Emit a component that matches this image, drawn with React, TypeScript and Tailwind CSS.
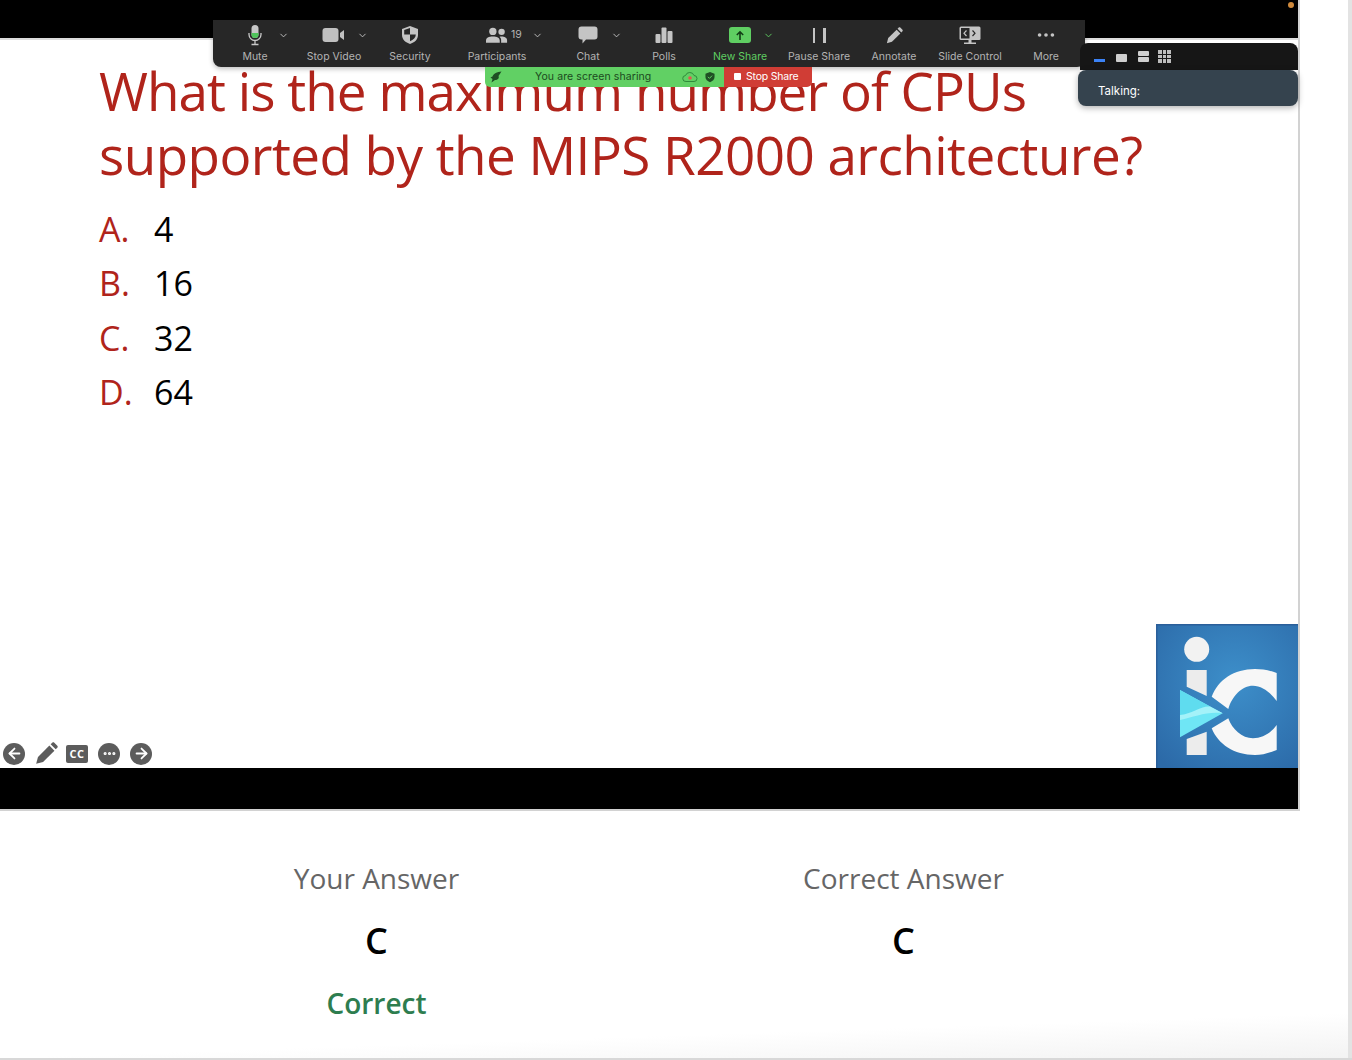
import { ArrowLeft, ArrowRight, ChevronDown, Ellipsis } from "lucide-react";

type ToolProps = {
  label: string;
  width: string;
  icon: React.ReactNode;
  caretLeft?: string;
  green?: boolean;
  children?: React.ReactNode;
};

function PencilIcon({ size, color, className }: { size: number; color: string; className?: string }) {
  return (
    <svg className={className} width={size} height={size} viewBox="0 0 20 20">
      <path d="M1 19L2.600 13L12.500 3.100L16.900 7.500L7 17.400Z" fill={color} />
      <path d="M13.600 2L15 0.600C15.500 0.100 16.300 0.100 16.800 0.600L19.400 3.200C19.900 3.700 19.900 4.500 19.400 5L18 6.400Z" fill={color} />
    </svg>
  );
}

function Tool({ label, width, icon, caretLeft, green, children }: ToolProps) {
  return (
    <div className={`relative flex h-full shrink-0 flex-col items-center pt-[4px] ${width}`}>
      <div className="flex h-[22px] items-center justify-center">{icon}</div>
      <span className={`mt-[4px] whitespace-nowrap text-[10.500px] leading-[14px] ${green ? "text-[#5fce62]" : "text-[#b4b4b4]"}`}>
        {label}
      </span>
      {caretLeft && (
        <ChevronDown
          size={11}
          strokeWidth={2}
          className={`absolute top-[10px] ${caretLeft} ${green ? "text-[#5fce62]" : "text-[#c4c4c4]"}`}
        />
      )}
      {children}
    </div>
  );
}

function ZoomToolbar() {
  return (
    <div className="absolute top-[20px] left-[213px] w-[872px] font-['Inter',sans-serif]">
      <div className="flex h-[47px] items-start rounded-b-[8px] bg-[#272727] shadow-[0_2px_5px_rgba(0,0,0,0.25)]">
        <Tool
          label="Mute"
          width="w-[84px]"
          caretLeft="left-[65px]"
          icon={
            <svg width="18" height="22" viewBox="0 0 18 22">
              <rect x="5.500" y="1" width="7" height="13" rx="3.500" fill="#c8c8c8" />
              <path d="M5.500 9h7v1.500a3.500 3.500 0 0 1-7 0z" fill="#4fc45a" />
              <path d="M3 9v1.500a6 6 0 0 0 12 0V9M9 16.500V20M5.500 20.500h7" fill="none" stroke="#c8c8c8" strokeWidth="1.300" />
            </svg>
          }
        />
        <Tool
          label="Stop Video"
          width="w-[74px]"
          caretLeft="left-[60px]"
          icon={
            <svg width="24" height="16" viewBox="0 0 24 16">
              <rect x="0.500" y="1" width="16" height="14" rx="3" fill="#c0c0c0" />
              <path d="M18 6l4-3v10l-4-3z" fill="#c0c0c0" />
            </svg>
          }
        />
        <Tool
          label="Security"
          width="w-[78px]"
          icon={
            <svg width="18" height="20" viewBox="0 0 18 20">
              <path d="M9 1l8 3v6c0 4.500-3.500 7.500-8 9-4.500-1.500-8-4.500-8-9V4z" fill="#c4c4c4" />
              <path d="M9 3v6.500H3.200V5zM9 9.500h5.800c0 3-2.400 5.400-5.800 6.800z" fill="#272727" />
            </svg>
          }
        />
        <Tool
          label="Participants"
          width="w-[96px]"
          caretLeft="left-[83px]"
          icon={
            <svg width="22" height="17" viewBox="0 0 24 18">
              <circle cx="7.500" cy="4.500" r="4" fill="#c4c4c4" />
              <circle cx="17" cy="5" r="3.500" fill="#c4c4c4" />
              <path d="M0 17v-2.500C0 11.500 3 10 7.500 10s7.500 1.500 7.500 4.500V17zM16.500 17v-3c0-1.500-.6-2.700-1.700-3.600 4-.7 8.200.6 8.200 3.800V17z" fill="#c4c4c4" />
            </svg>
          }
        >
          <span className="absolute top-[8px] left-[62px] text-[10.500px] leading-[14px] text-[#b4b4b4]">19</span>
        </Tool>
        <Tool
          label="Chat"
          width="w-[86px]"
          caretLeft="left-[66px]"
          icon={
            <svg width="20" height="18" viewBox="0 0 20 18">
              <path d="M3.500 0.500h13a3 3 0 0 1 3 3v7a3 3 0 0 1-3 3H8l-3.500 4v-4h-1a3 3 0 0 1-3-3v-7a3 3 0 0 1 3-3z" fill="#c4c4c4" />
            </svg>
          }
        />
        <Tool
          label="Polls"
          width="w-[66px]"
          icon={
            <svg width="18" height="17" viewBox="0 0 18 17">
              <rect x="0.500" y="7" width="5" height="9" rx="1" fill="#c4c4c4" />
              <rect x="6.500" y="0.500" width="5" height="15.500" rx="1" fill="#c4c4c4" />
              <rect x="12.500" y="4" width="5" height="12" rx="1" fill="#c4c4c4" />
            </svg>
          }
        />
        <Tool
          label="New Share"
          width="w-[86px]"
          caretLeft="left-[66px]"
          green
          icon={
            <div className="flex h-[16px] w-[22px] items-center justify-center rounded-[3px] bg-[#5fce62]">
              <svg width="10" height="11" viewBox="0 0 10 11">
                <path d="M5 10V2M1.800 5L5 1.800 8.200 5" fill="none" stroke="#123d16" strokeWidth="1.600" />
              </svg>
            </div>
          }
        />
        <Tool
          label="Pause Share"
          width="w-[72px]"
          icon={
            <div className="flex h-[15px] gap-[8px]">
              <div className="w-[2.500px] bg-[#c4c4c4]" />
              <div className="w-[2.500px] bg-[#c4c4c4]" />
            </div>
          }
        />
        <Tool label="Annotate" width="w-[78px]" icon={<PencilIcon size={17} color="#c4c4c4" />} />
        <Tool
          label="Slide Control"
          width="w-[74px]"
          icon={
            <svg width="22" height="19" viewBox="0 0 22 19">
              <rect x="0.500" y="0.500" width="21" height="13.500" rx="1.500" fill="#c4c4c4" />
              <rect x="2" y="2" width="8.500" height="10.500" fill="#272727" />
              <path d="M7.500 4.500L5 7.200l2.500 2.800" fill="none" stroke="#c4c4c4" strokeWidth="1.200" />
              <path d="M13.500 4.500L16 7.200l-2.500 2.800" fill="none" stroke="#272727" strokeWidth="1.200" />
              <path d="M9.500 14h3v2.500h-3zM5 16.500h12V18H5z" fill="#c4c4c4" />
            </svg>
          }
        />
        <Tool label="More" width="w-[78px]" icon={<Ellipsis size={22} strokeWidth={2} className="text-[#c4c4c4]" />} />
      </div>
      <div className="ml-[272px] flex h-[20px] w-[327px] overflow-hidden rounded-b-[5px]">
        <div className="relative flex w-[239px] items-center bg-[#61d064] text-[#1c4a20]">
          <svg className="ml-[5px]" width="12" height="12" viewBox="0 0 12 12">
            <path d="M11.500 0.500C7 1 3.500 2.500 2.500 5.500L0.500 6.500 2.500 8 1.500 11.500 5 9c3 0 4.500-2 3.500-4z" fill="#1f4f24" />
          </svg>
          <span className="ml-[33px] w-[116px] text-[10.500px] leading-[14px] tracking-[0.1px] whitespace-nowrap">You are screen sharing</span>
          <svg className="ml-[31px]" width="16" height="12" viewBox="0 0 16 12">
            <path d="M4 10.500a3 3 0 0 1-.5-6A4.500 4.500 0 0 1 12 4.500a3 3 0 0 1 0 6z" fill="none" stroke="#2f8a3a" strokeWidth="1" />
            <circle cx="8" cy="7" r="1.800" fill="#e2564f" />
          </svg>
          <svg className="ml-[7px]" width="10" height="12" viewBox="0 0 11 12">
            <path d="M5.500 0.500l5 1.800v3.700c0 2.800-2.200 4.700-5 5.700-2.800-1-5-2.900-5-5.700V2.300z" fill="#1f4f24" />
            <path d="M3.200 5.800l1.700 1.700 2.900-3" fill="none" stroke="#61d064" strokeWidth="1.100" />
          </svg>
        </div>
        <div className="flex flex-1 items-center bg-[#d03d35] pb-[1px] pl-[10px] text-white">
          <div className="h-[7px] w-[7px] rounded-[1px] bg-white" />
          <span className="ml-[5px] text-[10.500px] leading-[14px] tracking-[-0.2px] whitespace-nowrap">Stop Share</span>
        </div>
      </div>
    </div>
  );
}

function ThumbnailPanel() {
  return (
    <div className="absolute top-[43px] left-[1078px] h-[63px] w-[220px] font-['Inter',sans-serif]">
      <div className="ml-[2px] flex h-[27px] items-center rounded-t-[8px] bg-[#161616] pl-[14px]">
        <div className="mt-[8px] h-[3px] w-[11px] bg-[#3b82f6]" />
        <div className="ml-[11px] mt-[3px] h-[8px] w-[11px] rounded-[1px] bg-[#cfcfcf]" />
        <div className="ml-[11px] flex flex-col gap-[1px]">
          <div className="h-[5px] w-[11px] rounded-[1px] bg-[#cfcfcf]" />
          <div className="h-[5px] w-[11px] rounded-[1px] bg-[#cfcfcf]" />
        </div>
        <div className="ml-[9px] grid grid-cols-3 gap-[1px]">
          {Array.from({ length: 9 }).map((_, i) => (
            <div key={i} className="h-[3.500px] w-[3.500px] bg-[#bdbdbd]" />
          ))}
        </div>
      </div>
      <div className="flex h-[36px] items-center rounded-[8px] bg-[#35434e] pt-[7px] pl-[20px] shadow-[0_2px_6px_rgba(0,0,0,0.3)]">
        <span className="text-[11.500px] text-white">Talking:</span>
      </div>
    </div>
  );
}

function Logo() {
  return (
    <svg className="absolute right-0 bottom-0" width="142" height="144" viewBox="0 0 142 144">
      <defs>
        <radialGradient id="bg" cx="0.550" cy="0.400" r="0.750">
          <stop offset="0" stopColor="#3d8fca" />
          <stop offset="1" stopColor="#2c6aa8" />
        </radialGradient>
      </defs>
      <rect x="0" y="0" width="142" height="144" fill="url(#bg)" />
      <rect x="0" y="0" width="142" height="1.500" fill="#2a5f9a" />
      <rect x="0" y="0" width="1.500" height="144" fill="#2a5f9a" />
      <circle cx="40.700" cy="25.300" r="12.500" fill="#f2f2f2" />
      <path d="M30.700 46H50.700V72L30.700 62.700ZM30.700 115L50.700 107.700V131H30.700Z" fill="#ececec" />
      <path d="M120.700 49C113 46 106 45 99 45C78 45 62 56 55.700 72.700L72.300 85C76 72 86 61.700 97 61.700C106 61.700 114 68 120.700 77Z" fill="#f7f7f7" />
      <path d="M120.700 126C113 129 106 131 99 131C78 131 62 120 55.700 104.300L72.300 94.300C76 105 86 114.300 97 114.300C106 114.300 114 110 120.700 101Z" fill="#f7f7f7" />
      <path d="M24 66L66.700 89.300L24 113.300Z" fill="#6fe6f5" />
      <path d="M24 66L54 82.500C44 82 36 90 24 91Z" fill="#5fdcef" />
      <path d="M24 91C36 90 44 82 54 82.500L66.700 89.300C52 87 38 93 24 96Z" fill="#a4f2f9" />
    </svg>
  );
}

function RoundControl({ children }: { children: React.ReactNode }) {
  return (
    <div className="flex h-[22px] w-[22px] items-center justify-center rounded-full bg-[#5c5c5c] text-white">
      {children}
    </div>
  );
}

function Option({ letter, value }: { letter: string; value: string }) {
  return (
    <div className="flex h-[54.300px] items-center text-[34px] leading-none">
      <span className="w-[55px] text-[#b0241b]">{letter}</span>
      <span className="text-black">{value}</span>
    </div>
  );
}

export default function App() {
  return (
    <div className="relative h-[1060px] w-[1352px] overflow-hidden bg-white font-['Open_Sans',sans-serif]">
      <div className="absolute right-[4px] bottom-[2px] left-0 h-[45px] bg-gradient-to-br from-white via-white via-50% to-[#f3f3f3]" />
      <div className="absolute top-0 right-0 bottom-0 w-[4px] bg-[#e3e3e3]" />
      <div className="relative h-[811px] w-[1300px] border-r-2 border-b-2 border-[#d2d2d2]">
        <div className="h-[38px] bg-black" />
        <div className="relative h-[730px] border-t-2 border-[#dcdcdc] pt-[19px] pl-[99px]">
          <h1 className="text-[53px] leading-[64px] font-normal text-[#b0241b]">
            <span className="tracking-[-0.95px]">What is the maximum number of CPUs</span>
            <br />
            <span className="tracking-[-0.54px]">supported by the MIPS R2000 architecture?</span>
          </h1>
          <div className="mt-[15px]">
            <Option letter="A." value="4" />
            <Option letter="B." value="16" />
            <Option letter="C." value="32" />
            <Option letter="D." value="64" />
          </div>
          <div className="absolute bottom-[3px] left-[3px] flex items-center gap-[10px]">
            <RoundControl>
              <ArrowLeft size={17} strokeWidth={2.500} />
            </RoundControl>
            <PencilIcon size={23} color="#5c5c5c" className="mr-[-2px]" />
            <div className="flex h-[18px] w-[22px] items-center justify-center rounded-[2px] bg-[#5c5c5c] text-[11px] leading-none font-bold tracking-[0.5px] text-white">
              CC
            </div>
            <RoundControl>
              <Ellipsis size={15} strokeWidth={3} />
            </RoundControl>
            <RoundControl>
              <ArrowRight size={17} strokeWidth={2.500} />
            </RoundControl>
          </div>
          <Logo />
        </div>
        <div className="h-[41px] bg-black" />
      </div>
      <div className="absolute top-[2px] left-[1288px] h-[6px] w-[6px] rounded-full bg-[#d08a3c]" />
      <ZoomToolbar />
      <ThumbnailPanel />

      <div className="relative ml-[113px] flex w-[1055px] pt-[45px] text-center">
        <div className="w-[527px]">
          <p className="text-[28px] leading-[44px] text-[#666666]">Your Answer</p>
          <p className="mt-[19px] text-[36px] leading-[44px] font-semibold text-black">C</p>
          <p className="mt-[18px] text-[28px] leading-[44px] font-semibold text-[#2e7d4f]">Correct</p>
        </div>
        <div className="w-[527px]">
          <p className="text-[28px] leading-[44px] text-[#666666]">Correct Answer</p>
          <p className="mt-[19px] text-[36px] leading-[44px] font-semibold text-black">C</p>
        </div>
      </div>
      <div className="absolute right-0 bottom-0 left-0 h-[2px] bg-[#d8d8d8]" />
    </div>
  );
}
